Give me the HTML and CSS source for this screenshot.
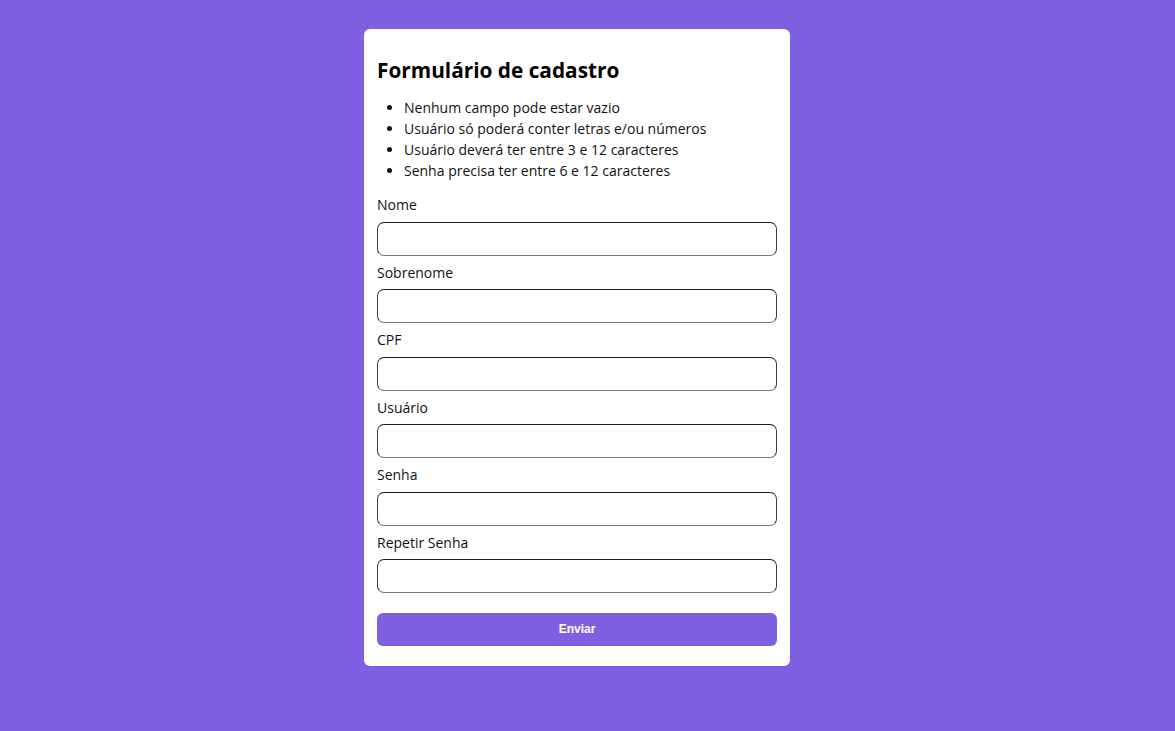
FILE: index.html
```html
<!DOCTYPE html>
<html lang="pt-BR">
<head>
<meta charset="utf-8">
<title>Formulário de cadastro</title>
<link rel="stylesheet" href="styles.css">
</head>
<body>
<main class="card">
  <h2 class="title">Formulário de cadastro</h2>
  <ul class="rules">
    <li>Nenhum campo pode estar vazio</li>
    <li>Usuário só poderá conter letras e/ou números</li>
    <li>Usuário deverá ter entre 3 e 12 caracteres</li>
    <li>Senha precisa ter entre 6 e 12 caracteres</li>
  </ul>
  <form class="form">
    <label class="label" for="nome">Nome</label>
    <input class="field" id="nome" type="text">
    <label class="label" for="sobrenome">Sobrenome</label>
    <input class="field" id="sobrenome" type="text">
    <label class="label" for="cpf">CPF</label>
    <input class="field" id="cpf" type="text">
    <label class="label" for="usuario">Usuário</label>
    <input class="field" id="usuario" type="text">
    <label class="label" for="senha">Senha</label>
    <input class="field" id="senha" type="password">
    <label class="label" for="senha2">Repetir Senha</label>
    <input class="field" id="senha2" type="password">
    <button class="submit" type="button">Enviar</button>
  </form>
</main>
</body>
</html>
```
FILE: styles.css
```css
html, body {
  margin: 0;
  padding: 0;
}
body {
  background: #7f60e0;
  min-height: 731px;
  display: flex;
  justify-content: center;
  align-items: flex-start;
  padding: 29px 21px 0 0;
  box-sizing: border-box;
  font-family: "Open Sans", "Liberation Sans", sans-serif;
  color: #111;
}
.card {
  width: 426px;
  box-sizing: border-box;
  background: #fff;
  border-radius: 6px;
  padding: 13px 13px 20px;
  display: flex;
  flex-direction: column;
}
.title {
  margin: 14px 0 13px;
  font-size: 20.8px;
  font-weight: 700;
  color: #000;
}
.rules {
  margin: 0 0 7px;
  padding-left: 27px;
  font-size: 14px;
  line-height: 21px;
}
.form {
  display: flex;
  flex-direction: column;
}
.label {
  display: block;
  font-size: 14px;
  line-height: 19px;
  margin: 7px 0 7.5px;
}
.field {
  height: 34px;
  box-sizing: border-box;
  margin: 0;
  border-style: solid;
  border-width: 1px;
  border-color: #1e1e1e #3a3a3a #777 #3a3a3a;
  border-radius: 7px;
  background: #fff;
  font-family: inherit;
  font-size: 14px;
  padding: 0 8px;
}
.submit {
  margin-top: 19.5px;
  height: 33px;
  border: none;
  border-radius: 6px;
  background: #7f60e0;
  color: #fff;
  font-family: "Liberation Sans", Arial, sans-serif;
  font-weight: 700;
  font-size: 12px;
  padding-top: 1px;
}
```
